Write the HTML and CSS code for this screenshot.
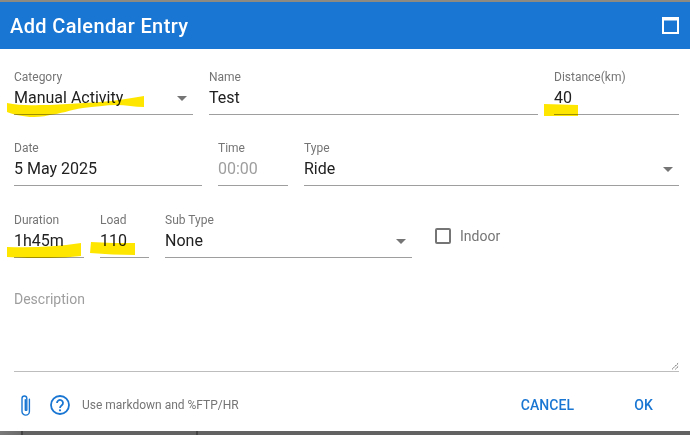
FILE: index.html
```html
<!DOCTYPE html>
<html lang="en">
<head>
<meta charset="utf-8">
<title>Add Calendar Entry</title>
<link rel="stylesheet" href="styles.css">
</head>
<body>
<div class="strip-top"></div>
<div class="dialog">
  <header class="title-bar">
    <h1 class="title">Add Calendar Entry</h1>
    <svg class="maximize" viewBox="0 0 17 17" aria-hidden="true"><path d="M0 0h17v17H0z M2 3.500v11.500h13V3.500z" fill="#fff" fill-rule="evenodd"/></svg>
  </header>
  <main class="content">
    <div class="row row-one">
      <div class="field w-category"><label class="label">Category</label><div class="control"><span class="value">Manual Activity</span><span class="arrow"></span></div></div>
      <div class="field grow"><label class="label">Name</label><div class="control"><span class="value">Test</span></div></div>
      <div class="field w-distance"><label class="label">Distance(km)</label><div class="control"><span class="value">40</span></div></div>
    </div>
    <div class="row row-two">
      <div class="field w-date"><label class="label">Date</label><div class="control"><span class="value">5 May 2025</span></div></div>
      <div class="field w-time"><label class="label">Time</label><div class="control"><span class="value muted">00:00</span></div></div>
      <div class="field grow"><label class="label">Type</label><div class="control"><span class="value">Ride</span><span class="arrow"></span></div></div>
    </div>
    <div class="row row-three">
      <div class="field w-duration"><label class="label">Duration</label><div class="control"><span class="value">1h45m</span></div></div>
      <div class="field w-load"><label class="label">Load</label><div class="control"><span class="value">110</span></div></div>
      <div class="field w-subtype"><label class="label">Sub Type</label><div class="control"><span class="value">None</span><span class="arrow"></span></div></div>
      <div class="check"><span class="box"></span><span class="check-label">Indoor</span></div>
    </div>
    <div class="description">
      <span class="placeholder">Description</span>
      <svg class="resize" viewBox="0 0 10 10" aria-hidden="true"><path d="M1.500 9 9 1.500M5.500 9 9 5.500" stroke="#444" stroke-width="1.100" fill="none" stroke-dasharray="2 .8"/></svg>
    </div>
  </main>
  <footer class="actions">
    <svg class="clip" viewBox="0 0 14 24" aria-hidden="true"><path d="M10.600 6v12.200a3.700 3.700 0 0 1-7.400 0V5.200a2.400 2.400 0 0 1 4.800 0v11.600a1 1 0 0 1-1.500 0V6.400" transform="translate(.8 .2)" fill="none" stroke="#1976d2" stroke-width="1.400" stroke-linecap="round"/></svg>
    <svg class="help" viewBox="0 0 20 20" aria-hidden="true"><circle cx="10" cy="10" r="9" fill="none" stroke="#1976d2" stroke-width="1.800"/><path d="M7 8a3 3 0 1 1 4.800 2.300c-1.100.8-1.800 1.300-1.800 2.700" fill="none" stroke="#1976d2" stroke-width="1.800"/><circle cx="10" cy="15.300" r="1.100" fill="#1976d2"/></svg>
    <span class="hint">Use markdown and %FTP/HR</span>
    <button class="btn btn-cancel">CANCEL</button>
    <button class="btn btn-ok">OK</button>
  </footer>
  <svg class="highlights" viewBox="0 0 690 435" aria-hidden="true">
    <path d="M7 103C20 106 33 105 50 105C67 104 85 103 100 102C115 101 130 98 144 96L144 107C135 107 125 105 117 105C105 105 95 107 83 108C70 110 60 114 50 115C42 117 35 117 30 117C20 116 12 114 7 112Z" fill="#ffe600"/>
    <path d="M544 104L578 105L578 116L544 116Z" fill="#ffe600"/>
    <path d="M7 247C30 248 55 247 81 243L81 256C70 257 60 258 50 258C35 258 20 258 7 257Z" fill="#ffe600"/>
    <path d="M91 242C105 243 120 243 135 243L135 255C120 255 105 254 90 253Z" fill="#ffe600"/>
  </svg>
</div>
<div class="strip-bottom"></div>
</body>
</html>
```
FILE: styles.css
```css
* { box-sizing: border-box; }
html, body { margin: 0; padding: 0; }
body { width: 690px; height: 435px; overflow: hidden; background: #606060; font-family: Roboto, "Liberation Sans", sans-serif; display: flex; flex-direction: column; }
.strip-top { height: 2px; flex: none; background: #8d8a82; }
.strip-bottom { flex: 1; background: linear-gradient(90deg, #7a7a7a 0, #6a6a6a 21px, #444 21px, #444 23px, #626262 23px, #626262 196px, #444 196px, #444 198px, #626262 198px); }
.dialog { position: relative; width: 690px; height: 429px; flex: none; background: #fff; display: flex; flex-direction: column; }
.title-bar { height: 47px; flex: none; background: #1976d2; display: flex; align-items: center; justify-content: space-between; padding: 0 11px 0 10px; }
.title { margin: 0; color: #fff; font-size: 20px; font-weight: 500; letter-spacing: .37px; }
.maximize { width: 17px; height: 17px; }
.content { flex: 1; padding: 0 11px 0 14px; display: flex; flex-direction: column; }
.row { display: flex; gap: 16px; }
.row-one { margin-top: 20px; }
.row-two { margin-top: 25px; }
.row-three { margin-top: 26px; }
.field { display: flex; flex-direction: column; }
.grow { flex: 1; }
.w-category { width: 179px; }
.w-distance { width: 125px; }
.w-date { width: 188px; }
.w-time { width: 70px; }
.w-duration { width: 70px; }
.w-load { width: 49px; }
.w-subtype { width: 247px; }
.label { font-size: 12px; line-height: 16px; color: #757575; height: 16px; }
.control { height: 30px; border-bottom: 1px solid #9e9e9e; display: flex; align-items: center; justify-content: space-between; padding-bottom: 3px; }
.value { font-size: 16px; line-height: 24px; color: #212121; }
.muted { color: #9e9e9e; }
.arrow { width: 0; height: 0; border-left: 5px solid transparent; border-right: 5px solid transparent; border-top: 5px solid #757575; margin-right: 6px; }
.check { display: flex; align-items: center; margin: 1px 0 0 7px; }
.box { width: 16px; height: 16px; border: 2px solid #757575; border-radius: 2px; }
.check-label { margin-left: 9px; font-size: 14px; color: #757575; }
.description { position: relative; margin-top: 29px; height: 85px; border-bottom: 1px solid #bdbdbd; }
.placeholder { font-size: 14px; line-height: 24px; color: #9e9e9e; }
.resize { position: absolute; right: 0; bottom: 1px; width: 8px; height: 8px; }
.actions { height: 59px; flex: none; display: flex; align-items: center; padding: 7px 0 0 18px; }
.clip { width: 14px; height: 24px; flex: none; }
.help { width: 20px; height: 20px; flex: none; margin-left: 18px; }
.hint { margin-left: 12px; font-size: 12px; color: #757575; }
.btn { border: 0; background: none; padding: 0; font-family: inherit; font-size: 14px; font-weight: 500; color: #1976d2; letter-spacing: .1px; }
.btn-cancel { margin-left: auto; }
.btn-ok { margin-left: 60px; margin-right: 37px; }
.highlights { position: absolute; left: 0; top: -2px; width: 690px; height: 435px; pointer-events: none; mix-blend-mode: multiply; }
```
